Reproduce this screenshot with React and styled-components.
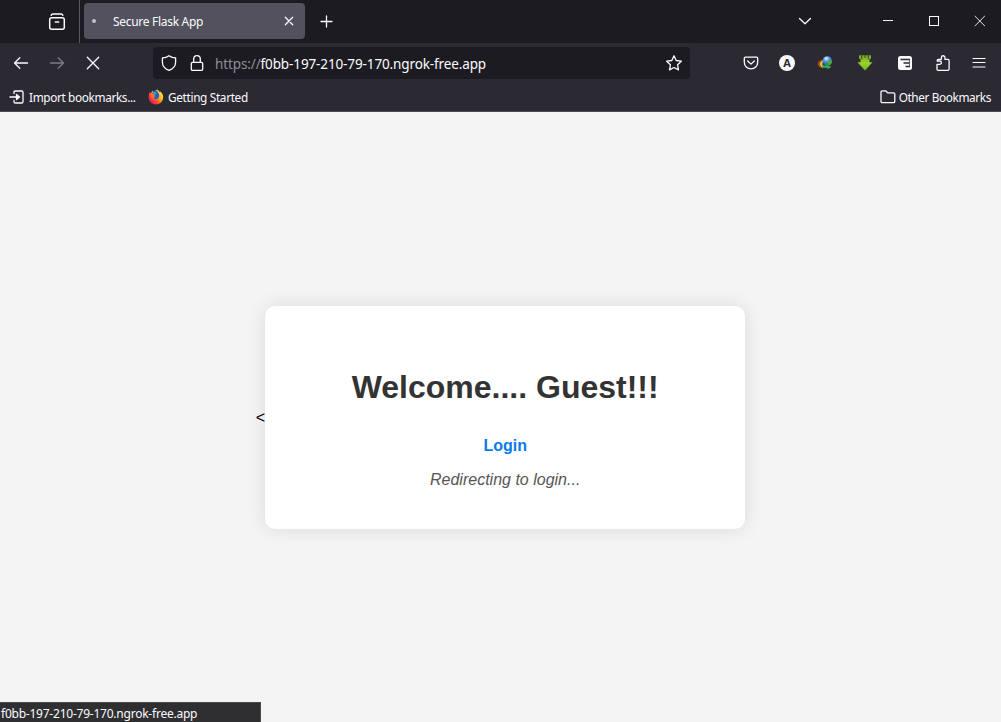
import React from "react";
import styled, { createGlobalStyle } from "styled-components";

const GlobalStyle = createGlobalStyle`
  *, *::before, *::after { box-sizing: border-box; }
  html, body { margin: 0; padding: 0; }
  body { background: #f4f4f4; overflow: hidden; }
`;

const ui = `"Noto Sans", "Open Sans", sans-serif`;

const Window = styled.div`
  position: relative;
  display: flex;
  flex-direction: column;
  width: 1001px;
  height: 722px;
  overflow: hidden;
  color: #fbfbfe;
  font-family: ${ui};
`;

const TabBar = styled.div`
  display: flex;
  height: 43px;
  background: #1c1b22;
`;

const RecentButton = styled.div`
  display: flex;
  align-items: center;
  width: 80px;
  padding-left: 48px;
  border-right: 1px solid #5a5962;
`;

const Tab = styled.div`
  display: flex;
  align-items: center;
  width: 221px;
  height: 36px;
  margin: 3px 0 0 4px;
  padding: 0 11px 0 8px;
  border-radius: 4px;
  background: #52515d;
`;

const LoadingDot = styled.span`
  width: 4px;
  height: 4px;
  border-radius: 50%;
  background: #c4c3cc;
`;

const Label = styled.span`
  font-size: ${(p) => p.$size || 12}px;
  line-height: 18px;
  letter-spacing: ${(p) => p.$track || 0}px;
  white-space: nowrap;
`;

const TabTitle = styled(Label)`
  flex: 1;
  margin-left: 17px;
  padding-top: 2px;
`;

const Slot = styled.div`
  display: flex;
  align-items: center;
  justify-content: center;
  width: ${(p) => p.$w || 36}px;
  height: ${(p) => p.$h || 40}px;
  color: ${(p) => (p.$dim ? "#7d7c84" : "#fbfbfe")};
`;

const WindowControls = styled.div`
  display: flex;
  margin-left: auto;
`;

const Toolbar = styled.div`
  display: flex;
  align-items: center;
  height: 40px;
  padding-left: 3px;
  background: #2b2a33;
`;

const UrlBar = styled.div`
  display: flex;
  align-items: center;
  width: 537px;
  height: 32px;
  margin: 0 43px 0 42px;
  padding: 0 8px;
  border-radius: 4px;
  background: #1c1b22;
`;

const Address = styled(Label)`
  flex: 1;
  margin-left: -2px;
  padding-top: 2px;
`;

const Scheme = styled.span`
  color: #8f8e96;
`;

const BookmarksBar = styled.div`
  display: flex;
  align-items: center;
  height: 29px;
  padding: 0 10px 0 9px;
  background: #2b2a33;
  border-bottom: 1px solid #4c4b53;
`;

const Bookmark = styled.div`
  display: flex;
  align-items: center;
  gap: ${(p) => p.$gap || 4}px;
  width: ${(p) => (p.$w ? `${p.$w}px` : "auto")};
  margin-left: ${(p) => (p.$end ? "auto" : 0)};
`;

const Page = styled.main`
  display: flex;
  flex: 1;
  align-items: center;
  justify-content: center;
  background: #f4f4f4;
  color: #000;
  font: 16px/18px "Liberation Sans", Arial, sans-serif;
`;

const StrayText = styled.span`
  padding-top: 2px;
`;

const Card = styled.section`
  width: 480px;
  height: 223px;
  padding-top: 63px;
  border-radius: 10px;
  background: #fff;
  text-align: center;
  box-shadow: 0 0 20px rgba(0, 0, 0, 0.1);
`;

const Heading = styled.h1`
  margin: 0 0 31px;
  color: #333;
  font-size: 32px;
  line-height: 37px;
  font-weight: 700;
`;

const LoginLink = styled.a`
  display: block;
  color: #0a7aea;
  font-weight: 700;
`;

const Notice = styled.p`
  margin: 16px 0 0;
  color: #555;
  font-style: italic;
`;

const StatusPanel = styled.div`
  position: absolute;
  left: 0;
  bottom: 0;
  width: 261px;
  height: 20px;
  padding: 2px 0 0 1px;
  border: solid #48474e;
  border-width: 1px 1px 0 0;
  background: #2f2f31;
  line-height: 0;
`;

const Svg = styled.svg`
  display: block;
  flex: none;
  overflow: visible;
`;

function Icon({ size = 16, stroke = 1.3, children }) {
  return (
    <Svg
      width={size}
      height={size}
      viewBox={`0 0 ${size} ${size}`}
      fill="none"
      stroke="currentColor"
      strokeWidth={stroke}
      strokeLinecap="round"
      strokeLinejoin="round"
    >
      {children}
    </Svg>
  );
}

const RecentIcon = () => (
  <Icon size={18} stroke={1.5}>
    <path d="M3.200 2.200c.3-.8.8-1.100 1.600-1.100h8.400c.8 0 1.300.3 1.600 1.100" />
    <rect x="1.700" y="4.700" width="14.600" height="11.600" rx="2" />
    <path d="M7.300 9h3.400" />
  </Icon>
);

const Firefox = () => (
  <Svg width="16" height="16" viewBox="0 0 16 16">
    <defs>
      <linearGradient id="flame" x1="0.9" y1="0.1" x2="0.15" y2="0.85">
        <stop offset="0" stopColor="#fff04a" />
        <stop offset=".4" stopColor="#ffb31c" />
        <stop offset=".7" stopColor="#ff4a2c" />
        <stop offset="1" stopColor="#e3175f" />
      </linearGradient>
    </defs>
    <path d="M1.500 3.600 3 4.100 4.500 1.600l.7 1.500L9 .5c1.200.7 2 1.400 2.500 2.500l.8-.4c1.800 1.500 2.900 3.200 2.900 5.700a7.300 7.300 0 0 1-14.600 0c0-1.800.3-3.300.9-4.700z" fill="url(#flame)" />
    <path d="M4.700 3.200C6 1.500 7.700 1 9.200 1.700c.2 1.500 2 2.500 2 4.900 0 2.300-1.500 3.700-3.400 3.700-1.500 0-2.700-.8-3-2 .9.500 2 .2 2.600-.5l-2-.4C4.500 6.800 4.400 6 4.700 5.500z" fill="#285cc9" />
    <path d="M5 3.500C6.500 2.500 8.500 3.300 8.600 4.800L6.300 6z" fill="#22a7e0" />
    <path d="M3.200 5.200c.8-.5 1.600-.5 2.400 0l2.100.2c-.2 1-1.400 1.100-1.700 1.800l1.500.5c-.7.9-1.700.9-2.600.7.8 1.700 2.400 2.200 4.200 1.400-1.100 1.400-3.600 1.500-5 0C2.800 8.500 2.700 6.800 3.200 5.200z" fill="#ff702b" />
  </Svg>
);

const Globe = () => (
  <Svg width="16" height="16" viewBox="0 0 16 16">
    <defs>
      <radialGradient id="earth" cx=".4" cy=".25" r=".8">
        <stop offset="0" stopColor="#e3f6ff" />
        <stop offset=".4" stopColor="#4b97e2" />
        <stop offset="1" stopColor="#174c96" />
      </radialGradient>
    </defs>
    <circle cx="10.300" cy="5.900" r="4.700" fill="url(#earth)" />
    <path d="M11.500 5.500 14 5l1 1.500-.8 2.500-2.200 1.500-1.800-2z" fill="#55aa35" />
    <path d="M6.500 4.500C2 4.800-.2 7.600 1 10.200c1 2 3.200 3 5.500 3-2.300-1.200-3.600-2.800-3.100-4.700.3-1.500 1.500-2.900 3.100-4z" fill="#a94421" />
    <path d="M6.300 5.300c-2.300 1-3.800 2.700-3.300 4.400.5 1.500 2 2.700 3.800 3.200-1.800-2.600-1.700-5.100-.5-7.600z" fill="#f0cb35" />
    <path d="M5.800 6.800c-1.200 2 .5 3.800 3.200 3.900l-.4-1.400 5.700 2.500-3.500 2.600v-1.400C6 13.500 3.200 10.500 5.800 6.800z" fill="#2eb14c" />
  </Svg>
);

const Download = () => (
  <Svg width="16" height="16" viewBox="0 0 16 16">
    <defs>
      <linearGradient id="leaf" x1="0" y1="0" x2="0" y2="1">
        <stop offset="0" stopColor="#70a51c" />
        <stop offset=".5" stopColor="#9bd22c" />
        <stop offset="1" stopColor="#76b51a" />
      </linearGradient>
    </defs>
    <path d="M2 .3h12v3.500h-1.500v3.400h3L8 15.500.5 7.200h3V3.800H2z" fill="url(#leaf)" />
    <path d="M4.700 .3v4M8 .3v2.500M11.300 .3v4" stroke="#2b2a33" strokeWidth=".8" />
  </Svg>
);

const Profile = styled.span`
  display: flex;
  align-items: center;
  justify-content: center;
  width: 16px;
  height: 16px;
  border-radius: 50%;
  background: #fbfbfe;
  color: #2b2a33;
  font: 700 11px/16px "Open Sans", sans-serif;
`;

export default function App() {
  return (
    <Window>
      <GlobalStyle />
      <TabBar>
        <RecentButton><RecentIcon /></RecentButton>
        <Tab>
          <LoadingDot />
          <TabTitle $track={-0.3}>Secure Flask App</TabTitle>
          <Icon size={10}><path d="m1.300 1.300 7.400 7.400m0-7.400L1.300 8.700" /></Icon>
        </Tab>
        <Slot $w={43} $h={43}><Icon size={13}><path d="M6.500 1v11M1 6.500h11" /></Icon></Slot>
        <WindowControls>
          <Slot $w={46} $h={42}><Icon size={14}><path d="m1.500 4.500 5.500 5.300 5.500-5.300" /></Icon></Slot>
          <Slot $w={37} $h={42} />
          <Slot $w={46} $h={42}><Icon size={10} stroke={1}><path d="M0 4.500h10" strokeLinecap="butt" /></Icon></Slot>
          <Slot $w={46} $h={42}><Icon size={10} stroke={1}><rect x=".5" y=".5" width="9" height="9" strokeLinejoin="miter" /></Icon></Slot>
          <Slot $w={44} $h={42}><Icon size={10} stroke={0.9}><path d="m1 .2 9.600 9.600m0-9.600L1 9.800" /></Icon></Slot>
        </WindowControls>
      </TabBar>

      <Toolbar>
        <Slot><Icon><path d="M14.500 8h-13m5.300-5.300L1.500 8l5.300 5.300" /></Icon></Slot>
        <Slot $dim><Icon><path d="M1.500 8h13M9.200 2.700 14.500 8l-5.300 5.300" /></Icon></Slot>
        <Slot><Icon><path d="m2.300 2.300 11.400 11.400m0-11.400L2.300 13.700" /></Icon></Slot>
        <UrlBar>
          <Icon><path d="M8 .7c2 1.600 4.100 2.200 6.600 2.200v4.400c0 3.600-2.600 6.600-6.600 8.100-4-1.500-6.600-4.500-6.600-8.100V2.900C3.900 2.900 6 2.300 8 .7z" /></Icon>
          <Slot $w={40} $h={32}><Icon><rect x="2.300" y="7.300" width="11.400" height="8" rx="1.200" /><path d="M4.700 7.300V4a3.300 3.300 0 0 1 6.600 0v3.300" /></Icon></Slot>
          <Address $size={13.5} $track={-0.12}>
            <Scheme>https://</Scheme>f0bb-197-210-79-170.ngrok-free.app
          </Address>
          <Icon><path d="m8 .8 2.200 4.700 5.100.7-3.700 3.600.9 5.100L8 12.500l-4.500 2.400.9-5.100L.7 6.200l5.100-.7z" /></Icon>
        </UrlBar>
        <Slot><Icon><path d="M2.300 2.200h11.400q1 0 1 1v4a6.700 6.700 0 0 1-13.400 0v-4q0-1 1-1z" /><path d="M4.700 6 8 9.100 11.300 6" /></Icon></Slot>
        <Slot><Profile>A</Profile></Slot>
        <Slot $w={40}><Globe /></Slot>
        <Slot $w={40}><Download /></Slot>
        <Slot $w={39}>
          <Icon>
            <rect x="1" y="1" width="14" height="14" rx="2.500" fill="currentColor" stroke="none" />
            <path d="M3.500 4.500H13M6.500 8H13M8.500 11.500H13" stroke="#2b2a33" strokeWidth="1.500" strokeLinecap="butt" />
            <path d="M12.500 5.200V7.500M12.500 8.800V11" stroke="#2b2a33" strokeWidth=".7" strokeLinecap="butt" />
          </Icon>
        </Slot>
        <Slot $w={37}><Icon><path d="M2 9.400h2.700a1.700 1.700 0 0 0 0-3.400H2.200V5.500q0-1.200 1.200-1.200h3V2.500a1.750 1.750 0 0 1 3.500 0v1.800h3q1.200 0 1.200 1.200v8.600q0 1.200-1.200 1.200H3.200Q2 15.300 2 14.100z" /></Icon></Slot>
        <Slot $w={36}><Icon stroke={1.2}><path d="M2 3.500h12M2 7.500h12M2 12h12" /></Icon></Slot>
      </Toolbar>

      <BookmarksBar>
        <Bookmark $w={139}>
          <Icon><path d="M5 4.500V3.300Q5 2 6.300 2h6.400Q14 2 14 3.300v9.400q0 1.300-1.300 1.300H6.300Q5 14 5 12.700v-1.200M1 8h7" /><path d="M7.500 5.500 10.500 8l-3 2.500z" fill="currentColor" /></Icon>
          <Label $size={11.8} $track={-0.36}>Import bookmarks...</Label>
        </Bookmark>
        <Bookmark>
          <Firefox />
          <Label $size={11.8} $track={-0.33}>Getting Started</Label>
        </Bookmark>
        <Bookmark $end $gap={3}>
          <Icon><path d="M1 3.100q0-1.300 1.300-1.300h3.300l2 2h5.900q1.300 0 1.300 1.300v7.300q0 1.300-1.300 1.300H2.300Q1 13.700 1 12.400z" /></Icon>
          <Label $size={11.8} $track={-0.38}>Other Bookmarks</Label>
        </Bookmark>
      </BookmarksBar>

      <Page>
        <StrayText>&lt;</StrayText>
        <Card>
          <Heading>Welcome.... Guest!!!</Heading>
          <LoginLink>Login</LoginLink>
          <Notice>Redirecting to login...</Notice>
        </Card>
      </Page>
      <StatusPanel><Label $track={-0.23}>f0bb-197-210-79-170.ngrok-free.app</Label></StatusPanel>
    </Window>
  );
}
